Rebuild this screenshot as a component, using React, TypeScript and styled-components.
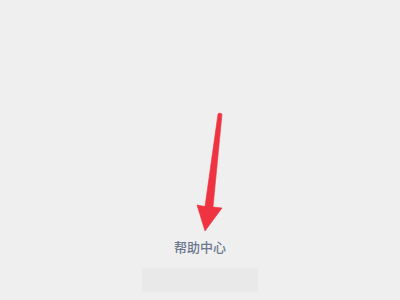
import React from "react";
import styled, { createGlobalStyle } from "styled-components";

const Global = createGlobalStyle`
  html, body { margin: 0; padding: 0; background: #efefef; }
  body { width: 400px; height: 300px; overflow: hidden; }
`;

const Page = styled.div`
  width: 400px;
  height: 300px;
  display: flex;
  flex-direction: column;
  align-items: center;
  padding-top: 112px;
  box-sizing: border-box;
  background: #efefef;
`;

const ArrowWrap = styled.div`
  width: 30px;
  height: 120px;
  margin-left: 20px;
  display: flex;
`;

const Label = styled.div`
  margin-top: 6px;
  font-family: "Noto Sans CJK SC", "Noto Sans", sans-serif;
  font-size: 13px;
  font-weight: 500;
  line-height: 18px;
  color: #6d7890;
  letter-spacing: 0px;
`;

const Bar = styled.div`
  margin-top: 12px;
  width: 116px;
  height: 24px;
  background: #e9e9e9;
  border-radius: 1px;
`;

const Arrow = () => (
  <svg width="30" height="120" viewBox="0 0 30 120">
    <polygon
      points="24,1 27,2 18,95 27,96 10,119 2,93 10,94.5 23,2"
      fill="#ef3340"
      stroke="#ef3340"
      strokeWidth="0.6"
      strokeLinejoin="round"
    />
  </svg>
);

export default function App() {
  return (
    <>
      <Global />
      <Page>
        <ArrowWrap>
          <Arrow />
        </ArrowWrap>
        <Label>帮助中心</Label>
        <Bar />
      </Page>
    </>
  );
}
